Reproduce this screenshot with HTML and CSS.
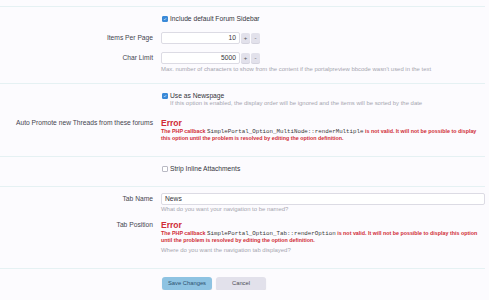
FILE: index.html
```html
<!DOCTYPE html>
<html lang="en">
<head>
    <meta charset="UTF-8">
    <meta name="viewport" content="width=device-width, initial-scale=1.0">
    <title>Portal Options</title>
    <link rel="stylesheet" href="styles.css">
</head>
<body>
    <form class="options">
        <div class="section s-first">
            <div class="row row-check">
                <div class="label"></div>
                <div class="control">
                    <label class="check"><span class="box on"><svg viewBox="0 0 8 8"><path d="M1.8 4.2 L3.4 5.8 L6.3 2.4"/></svg></span>Include default Forum Sidebar</label>
                </div>
            </div>
            <div class="row row-spin">
                <div class="label">Items Per Page</div>
                <div class="control spin">
                    <span class="input num">10</span>
                    <span class="spin-btn">+</span>
                    <span class="spin-btn">-</span>
                </div>
            </div>
            <div class="row row-spin2">
                <div class="label">Char Limit</div>
                <div class="control">
                    <div class="spin">
                        <span class="input num">5000</span>
                        <span class="spin-btn">+</span>
                        <span class="spin-btn">-</span>
                    </div>
                    <p class="hint">Max. number of characters to show from the content if the portalpreview bbcode wasn't used in the text</p>
                </div>
            </div>
        </div>

        <div class="section s-second">
            <div class="row row-check">
                <div class="label"></div>
                <div class="control">
                    <label class="check"><span class="box on"><svg viewBox="0 0 8 8"><path d="M1.8 4.2 L3.4 5.8 L6.3 2.4"/></svg></span>Use as Newspage</label>
                    <p class="hint indent">If this option is enabled, the display order will be ignored and the items will be sorted by the date</p>
                </div>
            </div>
            <div class="row row-error">
                <div class="label">Auto Promote new Threads from these forums</div>
                <div class="control">
                    <div class="error-title">Error</div>
                    <p class="error-text">The PHP callback <code>SimplePortal_Option_MultiNode::renderMultiple</code> is not valid. It will not be possible to display this option until the problem is resolved by editing the option definition.</p>
                </div>
            </div>
        </div>

        <div class="section s-third">
            <div class="row row-check">
                <div class="label"></div>
                <div class="control">
                    <label class="check"><span class="box"></span>Strip Inline Attachments</label>
                </div>
            </div>
        </div>

        <div class="section s-fourth">
            <div class="row row-text">
                <div class="label">Tab Name</div>
                <div class="control">
                    <span class="input text">News</span>
                    <p class="hint">What do you want your navigation to be named?</p>
                </div>
            </div>
            <div class="row row-error2">
                <div class="label">Tab Position</div>
                <div class="control">
                    <div class="error-title">Error</div>
                    <p class="error-text">The PHP callback <code>SimplePortal_Option_Tab::renderOption</code> is not valid. It will not be possible to display this option until the problem is resolved by editing the option definition.</p>
                    <p class="hint after-error">Where do you want the navigation tab displayed?</p>
                </div>
            </div>
        </div>

        <div class="buttons">
            <span class="btn primary">Save Changes</span>
            <span class="btn">Cancel</span>
        </div>
    </form>
</body>
</html>
```

FILE: styles.css
```css
:root {
    --bg: #fcfbfe;
    --line: #e5f1f3;
    --label: #45454f;
    --text: #34343c;
    --hint: #a6a6b0;
    --error: #d02c36;
    --button: #e2e1eb;
}

* {
    margin: 0;
    padding: 0;
    box-sizing: border-box;
}

body {
    font-family: "Liberation Sans", Arial, sans-serif;
    font-size: 6.7px;
    background: var(--bg);
    color: var(--text);
    padding: 6px 4px 0 0;
}

.section {
    border-bottom: 1px solid var(--line);
}

.s-first {
    border-top: 1px solid var(--line);
    padding: 7px 0 10px;
}

.s-second {
    padding: 7px 0 14px;
}

.s-third {
    padding: 7px 0 13px;
}

.s-fourth {
    padding: 6px 0 14px;
}

.row {
    display: grid;
    grid-template-columns: 153px 1fr;
    column-gap: 8px;
}

.label {
    text-align: right;
    color: var(--label);
    line-height: 12px;
}

.row-check .label {
    line-height: 9px;
}

.row-spin {
    margin-top: 9px;
}

.row-spin2 {
    margin-top: 8px;
}

.row-error {
    margin-top: 11px;
}

.row-error .label,
.row-error2 .label {
    line-height: 10px;
}

.row-error2 {
    margin-top: 7px;
}

.check {
    display: flex;
    align-items: center;
    gap: 2px;
    height: 9px;
    line-height: 9px;
    padding-left: 1px;
}

.box {
    width: 6px;
    height: 6px;
    border: 0.5px solid #b9b9c4;
    border-radius: 1px;
    background: #fff;
    display: inline-flex;
}

.box.on {
    background: #3a8ad8;
    border-color: #3a8ad8;
}

.box svg {
    width: 100%;
    height: 100%;
    fill: none;
    stroke: #fff;
    stroke-width: 1.2;
}

.spin {
    display: flex;
    align-items: center;
    gap: 1px;
}

.input {
    display: block;
    height: 12px;
    line-height: 10px;
    background: #fff;
    border: 1px solid #dcdbe4;
    border-radius: 2px;
    padding: 0 3px;
    color: var(--text);
}

.input.num {
    width: 79px;
    text-align: right;
}

.input.text {
    width: 100%;
}

.spin-btn {
    width: 9px;
    height: 10px;
    line-height: 10px;
    text-align: center;
    background: var(--button);
    border-radius: 2px;
    font-size: 6px;
    color: #555;
    box-shadow: 0 1px 0 #d4d3de;
}

.hint {
    font-size: 5.95px;
    line-height: 7px;
    height: 7px;
    color: var(--hint);
    margin-top: 2px;
    white-space: nowrap;
}

.hint.indent {
    padding-left: 9px;
    margin-top: 0;
}

.hint.after-error {
    margin-top: 3px;
}

.row-text .hint {
    margin-top: 1px;
}

.error-title {
    color: var(--error);
    font-weight: bold;
    font-size: 8.5px;
    line-height: 10px;
    height: 10px;
}

.error-text {
    color: var(--error);
    font-size: 5.35px;
    font-weight: bold;
    line-height: 7px;
}

.error-text code {
    font-family: "Liberation Mono", monospace;
    font-size: 5.8px;
    line-height: 1;
    font-weight: normal;
    color: #3a3a3a;
}

.buttons {
    display: flex;
    gap: 4px;
    padding: 8px 0 0 162px;
}

.btn {
    display: inline-block;
    width: 50px;
    height: 13px;
    line-height: 13px;
    text-align: center;
    border-radius: 3px;
    background: var(--button);
    color: #4a4a55;
    font-size: 5.8px;
    box-shadow: 0 1px 1px rgba(0, 0, 0, 0.12);
}

.btn.primary {
    background: #8ec3e2;
    color: #2d4f6d;
}
```
